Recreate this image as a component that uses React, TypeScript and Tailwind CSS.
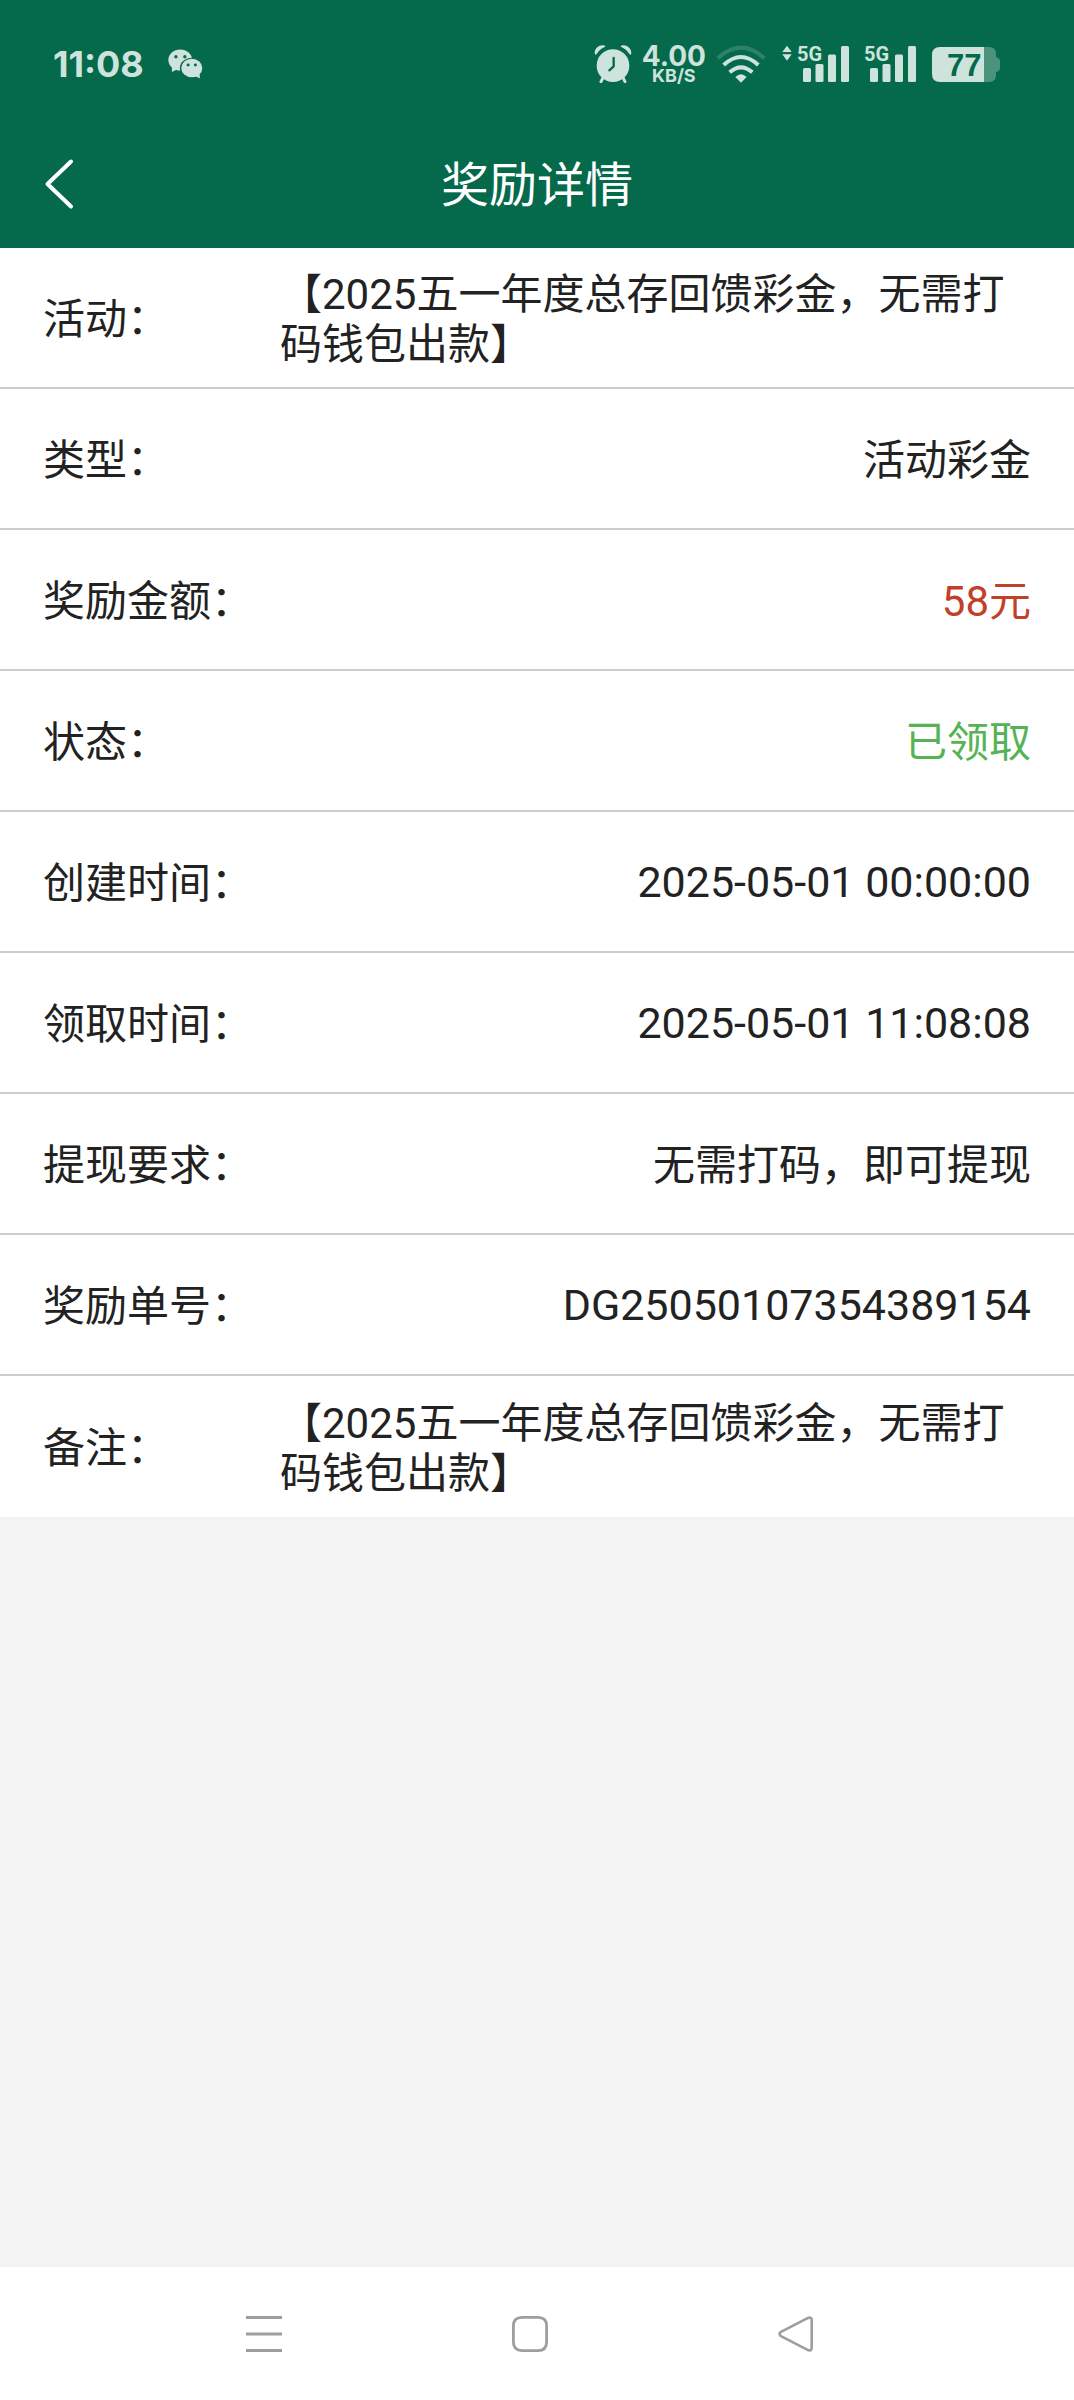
interface Detail {
  label: string;
  value: string;
  kind?: "long" | "number" | "amount" | "done";
}

const ACTIVITY = "【2025五一年度总存回馈彩金，无需打码钱包出款】";

const details: Detail[] = [
  { label: "活动：", value: ACTIVITY, kind: "long" },
  { label: "类型：", value: "活动彩金" },
  { label: "奖励金额：", value: "58元", kind: "amount" },
  { label: "状态：", value: "已领取", kind: "done" },
  { label: "创建时间：", value: "2025-05-01 00:00:00", kind: "number" },
  { label: "领取时间：", value: "2025-05-01 11:08:08", kind: "number" },
  { label: "提现要求：", value: "无需打码，即可提现" },
  { label: "奖励单号：", value: "DG25050107354389154", kind: "number" },
  { label: "备注：", value: ACTIVITY, kind: "long" },
];

const valueStyles = {
  long: "w-[751px] pt-1 text-[42px]",
  number: "text-right text-[43px]",
  amount: "pt-1 text-right text-[42px] text-[#c23f2a]",
  done: "pt-1 text-right text-[42px] text-[#55b354]",
  plain: "pt-1 text-right text-[42px]",
};

export default function App() {
  return (
    <div className="flex min-h-screen flex-col bg-[#f3f3f3] font-['Roboto','Noto_Sans_CJK_SC',sans-serif] text-[#222222]">
      <header className="bg-[#05694b]">
        <StatusBar />
        <div className="grid h-32 grid-cols-[1fr_auto_1fr] items-center">
          <button type="button" aria-label="返回" className="ml-[42px] w-9">
            <svg viewBox="0 0 36 52" className="h-[52px] w-9" fill="none" stroke="#fff" strokeWidth="4" strokeLinecap="round" strokeLinejoin="round">
              <path d="M29 3.500 5.500 26 29 48.500" />
            </svg>
          </button>
          <h1 className="pt-1 text-[48px] leading-[64px] text-white">奖励详情</h1>
        </div>
      </header>

      <main className="flex-1">
        <dl className="divide-y-2 divide-[#cdcdcd] bg-white">
          {details.map((d) => (
            <div key={d.label} className="flex h-[141px] items-center justify-between px-[43px] leading-[50px]">
              <dt className="shrink-0 pt-1 text-[42px]">{d.label}</dt>
              <dd className={valueStyles[d.kind ?? "plain"]}>{d.value}</dd>
            </div>
          ))}
        </dl>
      </main>

      <nav className="flex h-[133px] items-center justify-center gap-[230px] bg-white pr-[15px]">
        <button type="button" aria-label="最近任务">
          <svg viewBox="0 0 36 36" className="size-9" stroke="#9e9e9e" strokeWidth="3">
            <path d="M0 1.500h36M0 18h36M0 34.500h36" />
          </svg>
        </button>
        <button type="button" aria-label="主屏幕">
          <svg viewBox="0 0 36 36" className="size-9" fill="none" stroke="#9e9e9e" strokeWidth="2.800">
            <path d="M10 1.400h16q8.600 0 8.600 8.600v16q0 8.600-8.600 8.600h-16q-8.600 0-8.600-8.600v-16q0-8.600 8.600-8.600z" />
          </svg>
        </button>
        <button type="button" aria-label="后退">
          <svg viewBox="0 0 36 36" className="size-9" fill="none" stroke="#9e9e9e" strokeWidth="2.600" strokeLinejoin="round">
            <path d="M2.500 16.200 30 1.900q3.700-1 3.700 2.300v27.600q0 3.300-3.700 2.300L2.500 19.800q-1.800-1.800 0-3.600z" />
          </svg>
        </button>
      </nav>
    </div>
  );
}

function StatusBar() {
  return (
    <div className="flex h-[120px] items-center justify-between pt-2 pr-[74px] pl-[53px] font-['Inter','Roboto',sans-serif] text-[#cde3db]">
      <div className="flex items-center gap-6">
        <span className="text-[36px] leading-[40px] font-bold">11:08</span>
        <WechatIcon />
      </div>
      <div className="flex items-center">
        <AlarmIcon />
        <div className="ml-[10px] flex flex-col items-center pt-px font-bold">
          <span className="text-[28px] leading-[22px]">4.00</span>
          <span className="text-[18px] leading-[18px]">KB/S</span>
        </div>
        <WifiIcon />
        <svg viewBox="0 0 10 38" className="ml-4 h-[38px] w-[10px]" fill="currentColor">
          <path d="M5 .700 9.700 7H.300zM5 15.700.300 9.200h9.400z" />
        </svg>
        <SignalIcon />
        <SignalIcon />
        <BatteryIcon />
      </div>
    </div>
  );
}

function WechatIcon() {
  return (
    <svg viewBox="0 0 106 90" className="h-[30px] w-[35px]" fill="currentColor">
      <path d="M12 52 12 69 28 61z" />
      <ellipse cx="37" cy="33" rx="36" ry="32" />
      <g fill="#05694b">
        <circle cx="24" cy="23" r="5" />
        <circle cx="51" cy="23" r="5" />
        <ellipse cx="72" cy="57" rx="36" ry="31" />
      </g>
      <path d="M97 88 95 72 80 81z" />
      <ellipse cx="72" cy="57" rx="32" ry="28" />
      <g fill="#05694b">
        <circle cx="61" cy="48" r="4.500" />
        <circle cx="83" cy="48" r="4.500" />
      </g>
    </svg>
  );
}

function AlarmIcon() {
  return (
    <svg viewBox="0 0 114 114" className="size-[38px]" fill="currentColor">
      <circle cx="57" cy="62" r="49" />
      <path d="M2 25C2 8 18-2 32 2q5 2 0 4Q17 12 8 27q-5 5-6-2zM112 25c0-17-16-27-30-23q-5 2 0 4 15 6 24 21 5 5 6-2z" />
      <path d="M27 98 21 110M87 98l6 12" stroke="currentColor" strokeWidth="9" strokeLinecap="round" />
      <path d="M59 39v25L46 76" fill="none" stroke="#05694b" strokeWidth="7" strokeLinecap="round" strokeLinejoin="round" />
    </svg>
  );
}

function WifiIcon() {
  return (
    <svg viewBox="0 0 150 114" className="ml-[10px] h-[38px] w-[50px]" fill="none" stroke="currentColor" strokeWidth="12">
      <path d="M5 40Q75-24 145 40" opacity="0.200" />
      <path d="M23 60Q75 12 127 60M41 82Q75 52 109 82" />
      <path d="M75 113 58 96Q75 80 92 96z" fill="currentColor" stroke="none" />
    </svg>
  );
}

function SignalIcon() {
  return (
    <svg viewBox="0 0 54 38" className="ml-[5px] h-[38px] w-[62px] overflow-visible pr-2" fill="currentColor">
      <text x="0" y="16" fontSize="20" fontWeight="700" fontFamily="'Roboto',sans-serif">
        5G
      </text>
      <rect x="6" y="23" width="8" height="14" rx="1.500" />
      <rect x="18.500" y="19" width="8" height="18" rx="1.500" />
      <rect x="31" y="9.500" width="8" height="27.500" rx="1.500" />
      <rect x="44" y="1" width="8" height="36" rx="1.500" />
    </svg>
  );
}

function BatteryIcon() {
  return (
    <svg viewBox="0 0 68 38" className="ml-[6px] h-[38px] w-[68px]" fill="currentColor">
      <path d="M52 2h5q7 0 7 7v3q4 1 4 4v7q0 3-4 4v3q0 7-7 7h-5z" opacity="0.350" />
      <path d="M8 2h44v35H8q-8 0-8-8V10q0-8 8-8z" />
      <text x="15" y="31" fontSize="31" fontWeight="700" fontFamily="'Liberation Sans',sans-serif" fill="#05694b">
        77
      </text>
    </svg>
  );
}
